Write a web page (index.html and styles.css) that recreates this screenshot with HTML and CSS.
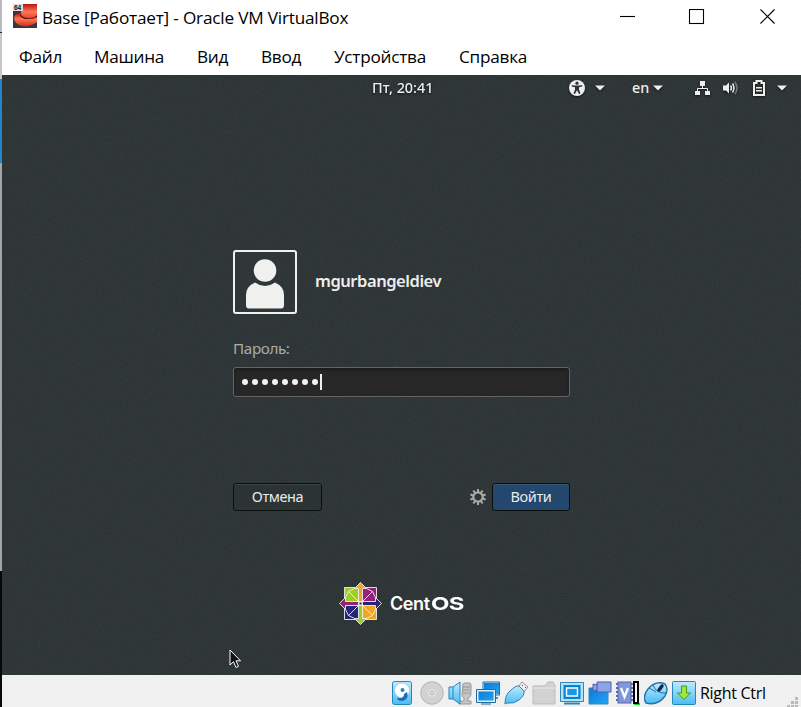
FILE: index.html
```
<!DOCTYPE html>
<html lang="ru">
<head>
<meta charset="utf-8">
<title>Base [Работает] - Oracle VM VirtualBox</title>
<link rel="stylesheet" href="styles.css">
</head>
<body>
<div class="desktop">
  <div class="behind"><i class="b1"></i><i class="b2"></i><i class="b3"></i><i class="b4"></i></div>
  <main class="window">
    <header class="titlebar">
      <svg class="app" width="24" height="24" viewBox="0 0 24 24">
        <defs><linearGradient id="red" x1="0" x2="0" y1="0" y2="1"><stop stop-color="#b9150b"/><stop offset=".45" stop-color="#ff7657"/><stop offset="1" stop-color="#d92d16"/></linearGradient></defs>
        <rect width="24" height="24" fill="#343745"/>
        <path d="M8 0h16v15q-8 5-14-1-4-4-1-8z" fill="url(#red)"/>
        <path d="M1 13q2-4 7-4 1 6 9 6 5 0 7-2v5q-6 5-14 4Q1 21 1 13z" fill="url(#red)"/>
        <path d="M6 9q4 6 11 5 5 0 7-3v2q-4 2-10 2-6 0-8-6z" fill="#43110e"/>
        <rect width="10" height="7" fill="#ddd"/><text x="1" y="6" class="tiny">64</text>
      </svg>
      <h1>Base [Работает] - Oracle VM VirtualBox</h1>
      <svg class="controls" width="156" height="16" viewBox="0 0 156 16" fill="none" stroke="#000" stroke-width="1.1"><path d="M0 7.500h15"/><rect x="69.500" y=".5" width="14" height="14"/><path d="M140.500.5l14 14m0-14l-14 14"/></svg>
    </header>
    <nav class="menu"><span>Файл</span><span>Машина</span><span>Вид</span><span>Ввод</span><span>Устройства</span><span>Справка</span></nav>
    <section class="guest">
      <svg class="grain" width="799" height="600"><filter id="noise"><feTurbulence type="fractalNoise" baseFrequency=".65" numOctaves="2" seed="4"/><feColorMatrix type="saturate" values="0"/></filter><rect width="799" height="600" filter="url(#noise)"/></svg>
      <div class="panel">
        <span></span><time>Пт, 20:41</time>
        <div class="tray">
          <svg width="16" height="16" viewBox="0 0 16 16"><circle cx="8" cy="8" r="8"/><g fill="#2c3334"><circle cx="8" cy="3.200" r="1.600"/><path d="M2.700 5.200l4 .3h2.600l4-.3v1.300l-3.300.7v2.300l1.500 4-1.400.6L8 10.300l-2.100 3.800-1.400-.6 1.500-4V7.200l-3.300-.7z"/></g></svg>
          <svg class="caret c1" width="10" height="6" viewBox="0 0 10 6"><path d="M0 .5h10l-5 5z"/></svg>
          <span class="lang">en</span>
          <svg class="caret c2" width="10" height="6" viewBox="0 0 10 6"><path d="M0 .5h10l-5 5z"/></svg>
          <svg class="net" width="16" height="16" viewBox="0 0 16 16"><path d="M5 1h5v5H5zM0 11h5v4H0zM10 11h5v4h-5z"/><path d="M7.500 6v3M2.500 11V8.500h10V11" fill="none" stroke="#eee"/></svg>
          <svg class="sound" width="16" height="16" viewBox="0 0 16 16"><path d="M0 5.500h3l3-3v11l-3-3H0z"/><g fill="none" stroke="#eee" stroke-width="1.500"><path d="M7.500 5.500q2 2.500 0 5M9.500 3.500q3 4.500 0 9"/><path d="M12 2q4 6 0 12" opacity=".4"/></g></svg>
          <svg class="battery" width="12" height="16" viewBox="0 0 12 16"><path d="M1 3h2.500V1h5v2H11v12H1z" fill="none" stroke="#eee" stroke-width="2"/><path d="M3 7h6v1.500H3zM3 10h6v1.500H3z"/></svg>
          <svg class="caret c3" width="10" height="6" viewBox="0 0 10 6"><path d="M0 .5h10l-5 5z"/></svg>
        </div>
      </div>
      <form class="login">
        <div class="user">
          <div class="avatar"><svg width="60" height="60" viewBox="0 0 60 60"><circle cx="30" cy="18.500" r="11.300"/><path d="M20 30.500q10 7 20 0 9 4 9 12.500v10q0 3.500-3 3.500H14q-3 0-3-3.500V43q0-8.500 9-12.500z"/></svg></div>
          <strong>mgurbangeldiev</strong>
        </div>
        <label>Пароль:</label>
        <div class="password"><i></i><i></i><i></i><i></i><i></i><i></i><i></i><i></i><b></b></div>
        <div class="actions"><button type="button">Отмена</button>
          <svg class="gear" width="16" height="16" viewBox="-8 -8 16 16"><circle r="4.700" fill="none" stroke="#a9aba5" stroke-width="2.200"/><g stroke="#a9aba5" stroke-width="2"><path id="tooth" d="M0-8v3M0 8V5"/><use href="#tooth" transform="rotate(36)"/><use href="#tooth" transform="rotate(72)"/><use href="#tooth" transform="rotate(108)"/><use href="#tooth" transform="rotate(144)"/></g></svg>
          <button type="button" class="primary">Войти</button></div>
      </form>
      <div class="brand">
        <svg width="43" height="43" viewBox="-21.500 -21.500 43 43" stroke="#eee" stroke-width=".9">
          <path d="M-16-16H-1V-1h-15z" fill="#9ccd2a"/><path d="M1-16h15V-1H1z" fill="#932279"/><path d="M1 1h15v15H1z" fill="#efa724"/><path d="M-16 1H-1v15h-15z" fill="#262577"/>
          <path d="M0-21l6 6H2V-2h-4v-13h-4z" fill="#efa724"/><path d="M21 0l-6 6V2H2v-4h13v-4z" fill="#262577"/><path d="M0 21l-6-6h4V2h4v13h4z" fill="#9ccd2a"/><path d="M-21 0l6-6v4h13v4h-13v4z" fill="#932279"/>
          <path d="M-2-2L-12-12l6-3M2-2L12-12l-6-3M-2 2L-12 12l6 3M2 2L12 12l-6 3M-12-12l-3 6M12-12l3 6M-12 12l-3-6M12 12l3-6" fill="none"/><rect x="-1.500" y="-1.500" width="3" height="3" fill="#2e3536"/>
        </svg><span class="cent">Cent</span><span class="os">OS</span>
      </div>
      <svg class="pointer" width="13" height="20" viewBox="0 0 13 20"><path d="M1 1v15l3.500-3.300L7 18.500l2.500-1.200L7 11.800h4.500z" fill="#111" stroke="#fff"/></svg>
    </section>
    <footer class="status">
      <svg class="disk" width="24" height="24" viewBox="0 0 24 24"><defs><linearGradient id="blue" x1="0" x2="0" y1="0" y2="1"><stop stop-color="#bdebff"/><stop offset="1" stop-color="#4abcf5"/></linearGradient><linearGradient id="deep" x1="0" y1="0" x2="1" y2="1"><stop stop-color="#0878d8"/><stop offset="1" stop-color="#24a7f2"/></linearGradient></defs><rect x="2.500" y=".5" width="19" height="23" rx="2" fill="url(#blue)" stroke="#2387bd"/><circle cx="12" cy="9.500" r="7.500" fill="#fff" stroke="#7fc6e8" stroke-width=".7"/><circle cx="12.500" cy="9" r="2" fill="#2d80c2"/><path d="M17 11q2 5-2 8-4 2-7 0l-1-2 4 0q3-1 3-4z" fill="#176fb7"/></svg>
      <svg width="24" height="24" viewBox="0 0 24 24"><circle cx="12" cy="12" r="11.300" fill="#d2d2d2" stroke="#b5b5b5"/><circle cx="12" cy="12" r="4" fill="#ddd"/><circle cx="12" cy="12" r="1.500" fill="#fff" stroke="#aaa"/></svg>
      <svg width="24" height="24" viewBox="0 0 24 24"><path d="M15 3q0-1 2-1h4q2 0 2 2v9q0 3-3 4v3h3v3H11v-3h5v-3q-2-1-2-3z" fill="#c5c5c5" stroke="#999"/><path d="M15 6h7M15 9h7M15 12h7" stroke="#999"/><path d="M1 6h4l7-5v22l-7-5H1z" fill="url(#blue)" stroke="#2387bd"/><path d="M5 6v12" stroke="#2387bd"/></svg>
      <svg width="24" height="24" viewBox="0 0 24 24"><path d="M7.500 1.500h16v12h-16z" fill="url(#deep)" stroke="#d6edfa"/><path d="M7 1h16.500v13H7z" fill="none" stroke="#246c9a"/><path d="M18 17h4" stroke="#789" stroke-width="2"/><path d="M1.500 9.500h17v11h-17z" fill="url(#deep)" stroke="#d6edfa" stroke-width="2"/><path d="M.5 8.500h19v13H.5zM5 23h10" fill="none" stroke="#246c9a"/></svg>
      <svg width="24" height="24" viewBox="0 0 24 24"><path d="M14 6l4-5 6 5-5 6z" fill="#eee" stroke="#999"/><path d="M18 4l1 1m2 1l1 1" stroke="#555"/><path d="M1 23q0-9 5-13 6-6 9-5l5 5q1 4-5 9-5 4-12 3z" fill="url(#blue)" stroke="#347fae"/></svg>
      <svg width="24" height="24" viewBox="0 0 24 24"><path d="M1 23V5h12l3-4h5l2 3v19z" fill="#d2d2d2" stroke="#bbb"/><path d="M1 7h22" stroke="#e8e8e8"/></svg>
      <svg width="24" height="24" viewBox="0 0 24 24"><path d="M.5 1.500h23v19H.5z" fill="#aee5fa" stroke="#3187b4"/><path d="M3.500 4h17v14h-17z" fill="#0781d3"/><path d="M6.500 7h11v8h-11z" fill="#1599eb" stroke="#fff" stroke-width="1.500"/><path d="M4 22.500h16" stroke="#3187b4" stroke-width="2"/></svg>
      <svg width="24" height="24" viewBox="0 0 24 24"><path d="M1 7h19v16H1z" fill="url(#deep)" stroke="#3989b1"/><path d="M9 1h14v10H9V9l-4 1V3l4 1z" fill="#8ca4e6" stroke="#4861b1"/><path d="M9 3v7" stroke="#4861b1"/></svg>
      <svg width="24" height="24" viewBox="0 0 24 24"><path d="M0 3h17M0 7h17M0 11h17M0 15h17M0 19h17" stroke="#626ba8" stroke-width="2"/><rect x="2" y="1" width="13" height="21" fill="#8297db" stroke="#5264a9"/><path d="M5 7l3.500 9L12 7" fill="none" stroke="#fff" stroke-width="2.200"/><path d="M18 22h6v2h-6z" fill="#0ddd26"/><path d="M18 1h4v21h-4z" fill="#fff" stroke="#000" stroke-width="2"/></svg>
      <svg width="24" height="24" viewBox="0 0 24 24"><path d="M2 22q-4-6 2-14 8-9 17-5 4 5 0 12-7 10-19 7z" fill="url(#blue)" stroke="#2472a4" stroke-width="1.400"/><path d="M9 4q3 9 14 8M12 11L5 7" fill="none" stroke="#2472a4"/><path d="M15 9l3-4" stroke="#10294c" stroke-width="3.500" stroke-linecap="round"/></svg>
      <svg width="24" height="24" viewBox="0 0 24 24"><rect x=".5" y=".5" width="23" height="23" rx="1" fill="url(#blue)" stroke="#2787b9"/><path d="M9.500 5h5v7h4L12 18.500 5.500 12h4z" fill="#9bea36" stroke="#4b981f"/></svg>
      <span class="host">Right Ctrl</span>
      <svg class="grip" width="12" height="12" viewBox="0 0 12 12" fill="#b9b9b9"><path d="M9 0h3v3H9zM5 4h3v3H5zM9 4h3v3H9zM1 8h3v3H1zM5 8h3v3H5zM9 8h3v3H9z"/></svg>
    </footer>
  </main>
</div>
</body>
</html>
```
FILE: styles.css
```
* { box-sizing: border-box; }
body { margin: 0; overflow: hidden; font-family: "Open Sans", "Noto Sans", sans-serif; }
svg { display: block; flex: none; }
.desktop { display: grid; grid-template-columns: 2px 799px; height: 707px; }
.behind { display: grid; grid-template-rows: 79px 84px 408px 136px; }
.b1 { background: linear-gradient(#b9bbbf 0 32px, #20242b 32px 33px, #c9c7c4 33px); }
.b2 { background: #2784c8; }
.b3 { background: #a5a5a5; }
.b4 { background: #080808; }
.window { display: grid; grid-template-rows: 36px 39px 600px 32px; background: #fff; }
.titlebar { display: flex; align-items: flex-start; padding: 4px 25px 0 11px; }
.tiny { font: bold 6.5px "Liberation Sans", sans-serif; fill: #111; }
.titlebar h1 { margin: 2px 0 0 5px; font: 17.2px/24px "Open Sans", sans-serif; letter-spacing: -.2px; white-space: nowrap; }
.controls { margin: 5px 0 0 auto; }
.menu { display: grid; grid-template-columns: 75px 103px 64px 73px 125px 90px; padding-left: 17px; font-size: 17.2px; line-height: 42px; letter-spacing: -.25px; white-space: nowrap; }
.guest { position: relative; background: #2a3132; overflow: hidden; color: #eee; }
.grain { position: absolute; inset: 0; opacity: .08; }
.panel { position: relative; height: 26px; display: grid; grid-template-columns: 370px 197px 232px; font: 500 14.4px/26px "Noto Sans", sans-serif; letter-spacing: 0; }
.tray { display: flex; align-items: center; fill: #eee; }
.tray svg, .panel time { filter: drop-shadow(0 1px 1px #111); }
.c1 { margin-left: 10px; }
.lang { width: 16px; margin-left: 27px; }
.c2 { margin-left: 5px; }
.net { margin-left: 32px; }
.sound { margin-left: 12px; }
.battery { margin-left: 14px; }
.c3 { margin-left: 12px; }
.login { position: relative; width: 337px; margin: 149px 0 0 231px; }
.user { display: flex; align-items: center; gap: 18px; height: 64px; }
.avatar { width: 64px; height: 64px; border: 2px solid #f0f0ee; border-radius: 3px; fill: #f0f0ee; }
.user strong { font: 600 16.5px/24px "Noto Sans", sans-serif; letter-spacing: -.45px; margin-top: -2px; }
label { display: block; height: 24px; margin-top: 22px; color: #a9adab; font: 15.2px/24px "Noto Sans", sans-serif; letter-spacing: -.35px; }
.password { display: flex; align-items: center; gap: 4px; height: 30px; margin-top: 7px; padding-left: 8px; border: 1px solid #626563; border-radius: 3px; background: #272727; box-shadow: inset 0 2px 3px #1b1b1b; }
.password i { width: 6px; height: 6px; border-radius: 50%; background: #f2f2f2; }
.password b { width: 2px; height: 16px; margin-left: -2px; background: #eee; }
.actions { display: flex; align-items: center; height: 28px; margin-top: 86px; }
button { width: 89px; height: 28px; padding: 0 0 2px; border: 1px solid #0b0e0e; border-radius: 3px; background: #2b3333; color: #e9eaea; font: 14.5px/22px "Noto Sans", sans-serif; letter-spacing: -.4px; box-shadow: inset 0 1px #3b4545; }
.gear { margin-left: auto; }
.primary { width: 78px; margin-left: 6px; background: #24476d; box-shadow: inset 0 1px #39597a; }
.brand { position: relative; display: flex; align-items: center; width: 126px; height: 43px; margin: 71px 0 0 337px; color: #fff; }
.brand span { font: 600 18px/28px Inter, sans-serif; }
.brand .cent { width: 41px; margin-left: 8px; letter-spacing: -.4px; }
.brand .os { font-weight: 700; letter-spacing: -.5px; transform: scaleX(1.33); transform-origin: left; }
.pointer { position: absolute; left: 227px; top: 574px; }
.status { display: flex; align-items: flex-start; gap: 4px; padding: 6px 0 0 388px; background: #f0f0f0; }
.disk { margin-right: 2px; }
.host { font-size: 16px; line-height: 24px; letter-spacing: -.3px; white-space: nowrap; }
.grip { margin: 16px 3px 0 auto; }
```
